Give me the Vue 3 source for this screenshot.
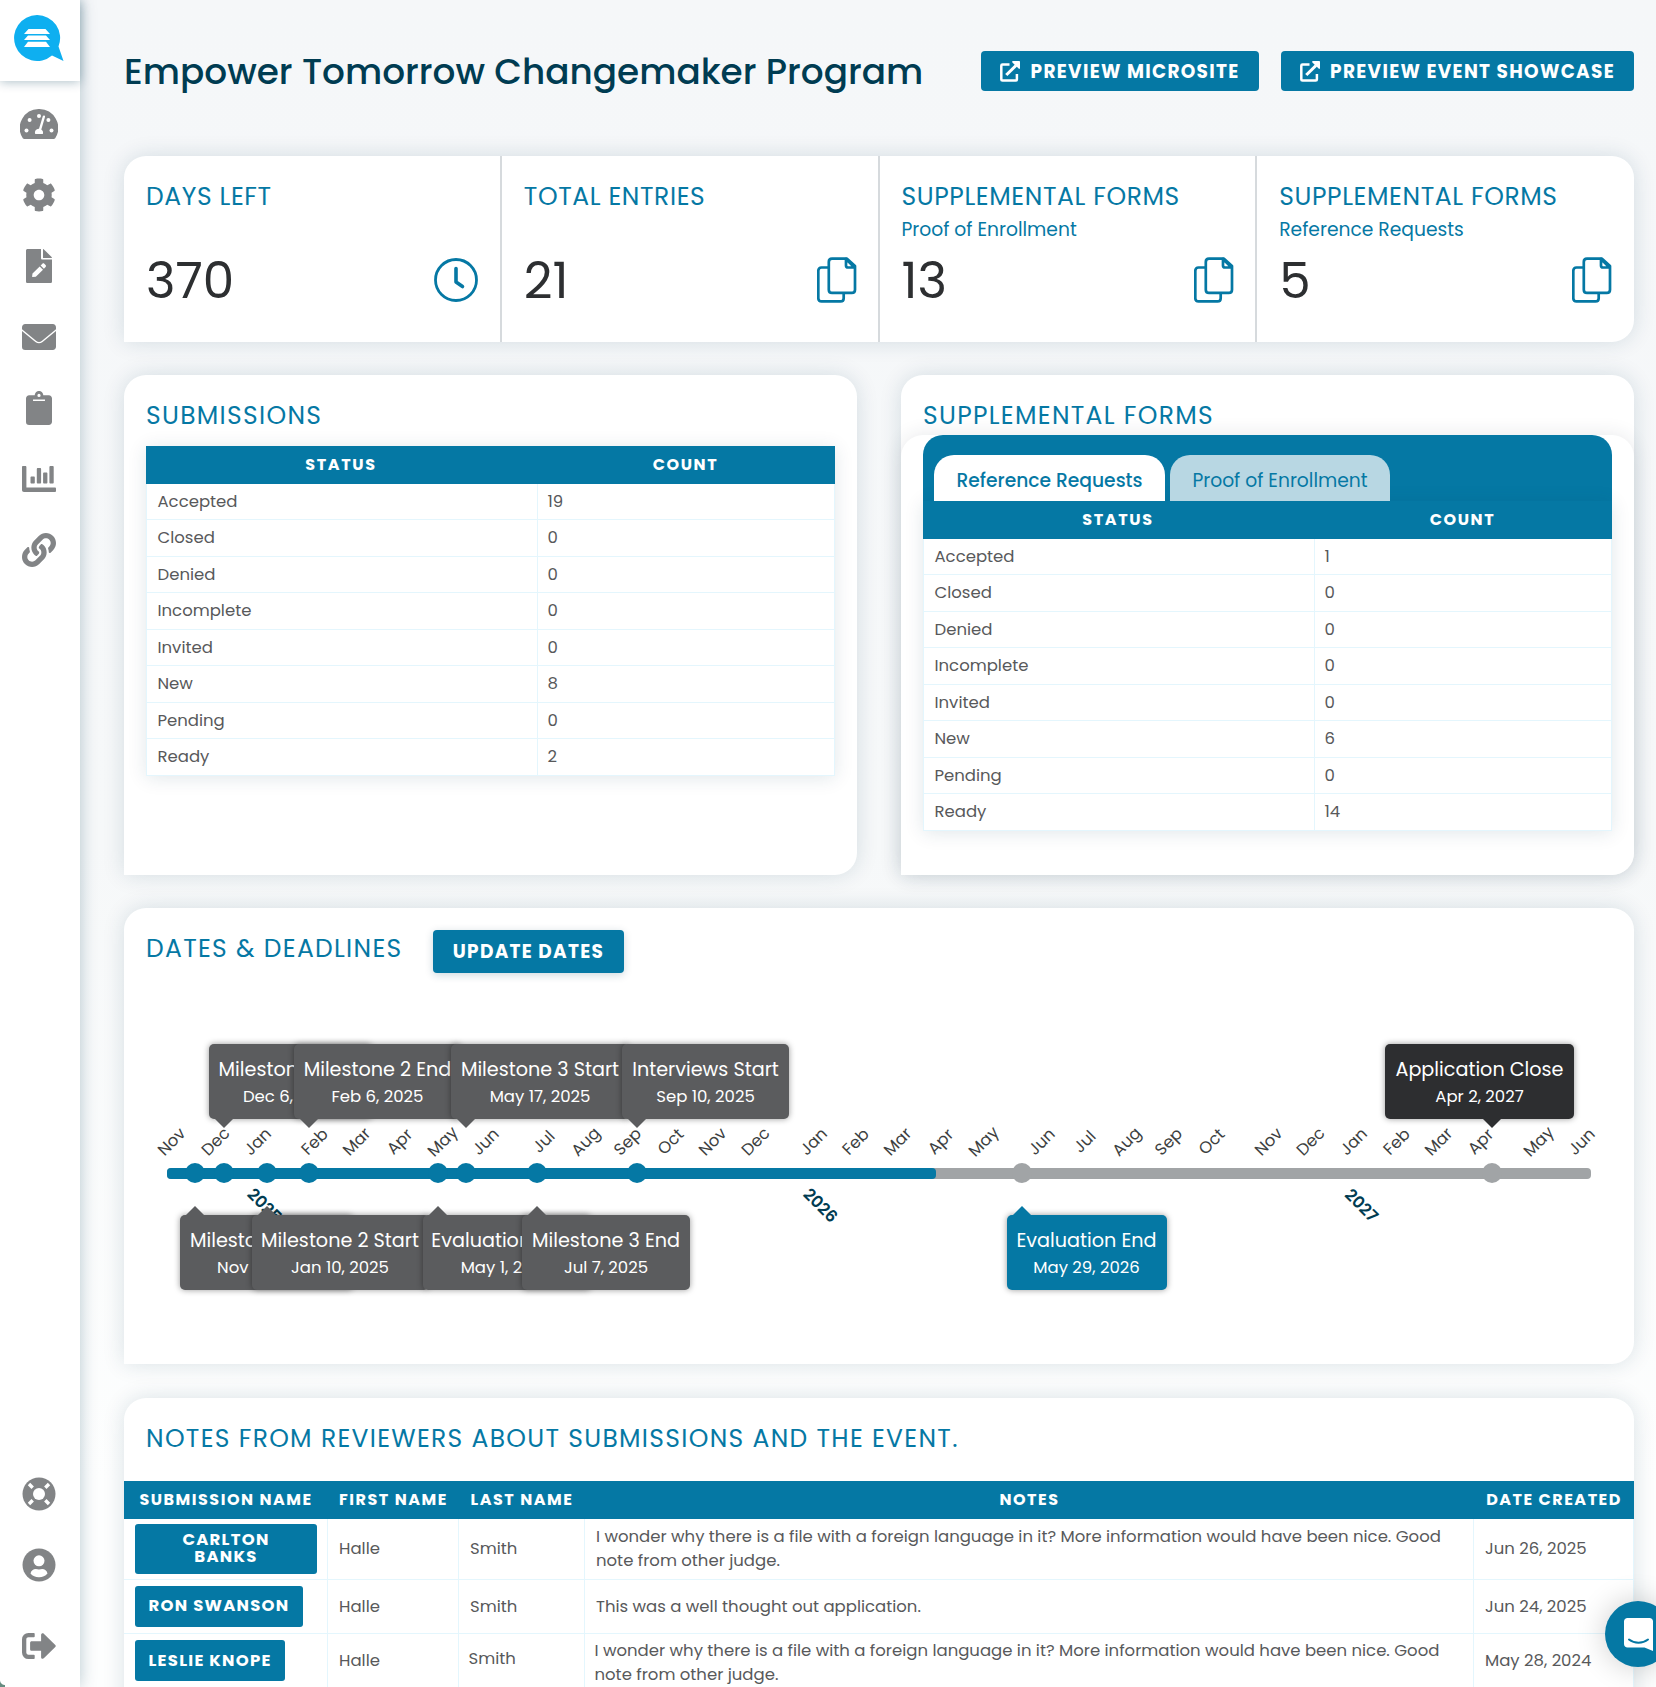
<script setup>
const statuses = ['Accepted', 'Closed', 'Denied', 'Incomplete', 'Invited', 'New', 'Pending', 'Ready']
const submissionCounts = [19, 0, 0, 0, 0, 8, 0, 2]
const supplementalCounts = [1, 0, 0, 0, 0, 6, 0, 14]
const submissions = statuses.map((status, i) => ({ status, count: submissionCounts[i] }))
const supplemental = statuses.map((status, i) => ({ status, count: supplementalCounts[i] }))

const stats = [
  { label: 'DAYS LEFT', value: 370, icon: 'clock' },
  { label: 'TOTAL ENTRIES', value: 21, icon: 'copy' },
  { label: 'SUPPLEMENTAL FORMS', sub: 'Proof of Enrollment', value: 13, icon: 'copy' },
  { label: 'SUPPLEMENTAL FORMS', sub: 'Reference Requests', value: 5, icon: 'copy' }
]

// x offsets are relative to the left end of the timeline bar
const monthX = [5, 49, 91, 148, 190, 233, 276, 319, 377, 419, 461, 504, 546, 589, 647, 689, 731, 774, 817, 875, 918, 960, 1002, 1045, 1102, 1144, 1187, 1230, 1272, 1314, 1372, 1415]
const monthNames = ['Jan', 'Feb', 'Mar', 'Apr', 'May', 'Jun', 'Jul', 'Aug', 'Sep', 'Oct', 'Nov', 'Dec']
const months = monthX.map((x, i) => ({ x, name: monthNames[(i + 10) % 12] }))
const years = [{ x: 97, name: '2025' }, { x: 653, name: '2026' }, { x: 1194, name: '2027' }]
const events = [
  { x: 28, w: 173, title: 'Milestone 1 Start', date: 'Nov 15, 2024', side: 'below' },
  { x: 56.5, w: 163, title: 'Milestone 1 End', date: 'Dec 6, 2024', side: 'above' },
  { x: 99.5, w: 177, title: 'Milestone 2 Start', date: 'Jan 10, 2025', side: 'below' },
  { x: 142, w: 167, title: 'Milestone 2 End', date: 'Feb 6, 2025', side: 'above' },
  { x: 270.5, w: 168, title: 'Evaluation Start', date: 'May 1, 2025', side: 'below' },
  { x: 299, w: 178, title: 'Milestone 3 Start', date: 'May 17, 2025', side: 'above' },
  { x: 370, w: 168, title: 'Milestone 3 End', date: 'Jul 7, 2025', side: 'below' },
  { x: 470, w: 167, title: 'Interviews Start', date: 'Sep 10, 2025', side: 'above' },
  { x: 854.5, w: 160, title: 'Evaluation End', date: 'May 29, 2026', side: 'below', tone: 'next' },
  { x: 1325, w: 189, title: 'Application Close', date: 'Apr 2, 2027', side: 'above', tone: 'future', shift: 92 }
]

const longNote = 'I wonder why there is a file with a foreign language in it? More information would have been nice. Good note from other judge.'
const notes = [
  { name: 'CARLTON BANKS', first: 'Halle', last: 'Smith', note: longNote, date: 'Jun 26, 2025' },
  { name: 'RON SWANSON', first: 'Halle', last: 'Smith', note: 'This was a well thought out application.', date: 'Jun 24, 2025' },
  { name: 'LESLIE KNOPE', first: 'Halle', last: 'Smith', note: longNote, date: 'May 28, 2024' }
]
</script>

<template>
  <div class="page">
    <aside class="sidebar">
      <div class="brand">
        <svg width="50" height="47" viewBox="0 0 50 47"><path fill="#0eaff0" d="M23 0a23 23 0 1 0 15 40.500L49.500 46l-5-14.500A23 23 0 0 0 23 0z" /><path fill="#fff" d="M14.500 14h17l4.500 5H10zM14 20.500h18l4 4.500H10zM14 26.800h18l4 5.200H10z" /></svg>
      </div>
      <nav class="nav">
        <a><svg width="38" height="31" viewBox="0 0 38 31"><path d="M19 0A19 19 0 0 0 2.800 29.200c.4.600.9.800 1.600.8h29.200c.7 0 1.200-.2 1.600-.8A19 19 0 0 0 19 0z" /><g fill="#fff"><circle cx="6.500" cy="21.500" r="2" /><circle cx="9.600" cy="11" r="2" /><circle cx="19" cy="7" r="2" /><circle cx="28.400" cy="11" r="2" /><circle cx="31.500" cy="21.500" r="2" /><path d="M24.200 6.500c.8.200 1 .8.800 1.500l-3.700 12.500a4 4 0 0 1 1.500 4.600h-7.600a3.900 3.900 0 0 1 3.800-5.400l3.800-12.500c.2-.6.800-.9 1.400-.7z" /></g></svg></a>
        <a><svg width="34" height="34" viewBox="0 0 512 512"><path d="M487.4 315.7l-42.6-24.6c4.3-23.2 4.300-47 0-70.200l42.600-24.600c4.900-2.800 7.100-8.600 5.500-14-11.100-35.600-30-67.800-54.700-94.600-3.800-4.100-10-5.100-14.800-2.300L380.800 110c-17.900-15.400-38.500-27.300-60.800-35.100V25.800c0-5.600-3.900-10.500-9.400-11.700-36.700-8.200-74.300-7.800-109.200 0-5.500 1.200-9.400 6.100-9.400 11.700V75c-22.200 7.900-42.800 19.800-60.800 35.100L88.700 85.500c-4.900-2.800-11-1.900-14.800 2.300-24.700 26.700-43.600 58.900-54.700 94.600-1.700 5.400.6 11.200 5.500 14L67.300 221c-4.300 23.200-4.300 47 0 70.200l-42.600 24.600c-4.900 2.800-7.100 8.600-5.500 14 11.100 35.600 30 67.800 54.700 94.600 3.800 4.100 10 5.100 14.800 2.300l42.600-24.600c17.900 15.400 38.500 27.300 60.800 35.100v49.200c0 5.600 3.900 10.500 9.400 11.700 36.700 8.200 74.300 7.800 109.200 0 5.500-1.200 9.400-6.100 9.400-11.700v-49.200c22.200-7.900 42.800-19.800 60.800-35.100l42.600 24.600c4.900 2.800 11 1.900 14.800-2.300 24.700-26.700 43.600-58.900 54.700-94.600 1.500-5.500-.7-11.300-5.600-14.100zM256 336c-44.100 0-80-35.900-80-80s35.900-80 80-80 80 35.900 80 80-35.900 80-80 80z" /></svg></a>
        <a><svg width="26" height="34" viewBox="0 0 26 34"><path d="M1.600 0H15v9.200c0 .8.600 1.400 1.500 1.400H26v21.800c0 .9-.7 1.600-1.600 1.600H1.600C.7 34 0 33.300 0 32.400V1.600C0 .7.700 0 1.600 0zM17 0l.7.200L25.600 8l.4.900h-9z" /><path fill="#fff" d="M13.700 17.400l3.300 3.300-7.200 7.100-3.300.3c-.3 0-.5-.2-.4-.5l.4-3.100zM14.600 16.500l1.800-1.800c.6-.5 1.400-.5 1.900 0l1.300 1.400c.5.500.5 1.300 0 1.800l-1.700 1.800z" /></svg></a>
        <a><svg width="34" height="26" viewBox="0 0 34 26"><path d="M3.200 0h27.600C32.600 0 34 1.400 34 3.200v2L20 16.700c-2 1.600-4 1.600-6 0L0 5.200v-2C0 1.400 1.400 0 3.200 0z" /><path d="M0 7l13.400 11c2.300 1.800 4.900 1.800 7.200 0L34 7v15.800c0 1.800-1.400 3.200-3.200 3.200H3.200A3.200 3.200 0 0 1 0 22.800z" /></svg></a>
        <a><svg width="26" height="34" viewBox="0 0 26 34"><path fill-rule="evenodd" d="M3.200 4.200h5.500a4.300 4.300 0 0 1 8.600 0h5.500C24.600 4.200 26 5.600 26 7.400v23.400c0 1.800-1.400 3.200-3.200 3.200H3.200A3.200 3.200 0 0 1 0 30.800V7.400c0-1.800 1.400-3.200 3.200-3.200zM13 2.800a1.600 1.600 0 1 0 0 3.200 1.600 1.600 0 0 0 0-3.200zM7 8.600v.8c0 .4.300.6.600.6h10.800c.3 0 .6-.2.600-.6v-.8z" /></svg></a>
        <a><svg width="34" height="26" viewBox="0 0 34 26"><path d="M1 0h2.400c.6 0 1 .5 1 1v20.500H33c.5 0 1 .5 1 1V25c0 .5-.5 1-1 1H2c-1.200 0-2-.8-2-2V1c0-.5.400-1 1-1zM9.500 10.500h2.300c.6 0 1 .4 1 1v5c0 .600-.4 1-1 1H9.500c-.5 0-1-.4-1-1v-5c0-.6.500-1 1-1zM15.800 2h2.300c.6 0 1 .5 1 1v13.500c0 .6-.4 1-1 1h-2.300c-.5 0-1-.4-1-1V3c0-.5.500-1 1-1zM22.100 6.500h2.300c.6 0 1 .4 1 1v9c0 .6-.4 1-1 1h-2.300c-.5 0-1-.4-1-1v-9c0-.6.500-1 1-1zM28.400 0h2.300c.6 0 1 .500 1 1v15.500c0 .6-.4 1-1 1h-2.300c-.5 0-1-.4-1-1V1c0-.5.500-1 1-1z" /></svg></a>
        <a><svg width="34" height="34" viewBox="0 0 512 512"><path d="M326.612 185.391c59.747 59.809 58.927 155.698.36 214.590-.11.12-.24.25-.36.37l-67.200 67.200c-59.270 59.270-155.699 59.262-214.960 0-59.270-59.260-59.270-155.700 0-214.960l37.106-37.106c9.840-9.840 26.786-3.300 27.294 10.606.648 17.722 3.826 35.527 9.690 52.721 1.986 5.822.567 12.262-3.783 16.612l-13.087 13.087c-28.026 28.026-28.905 73.660-1.155 101.960 28.024 28.579 74.086 28.749 102.325.51l67.200-67.190c28.191-28.191 28.073-73.757 0-101.830-3.701-3.694-7.429-6.564-10.341-8.569a16.037 16.037 0 0 1-6.947-12.606c-.396-10.567 3.348-21.456 11.698-29.806l21.054-21.055c5.521-5.521 14.182-6.199 20.584-1.731a152.482 152.482 0 0 1 20.522 17.197zM467.547 44.449c-59.261-59.262-155.690-59.270-214.960 0l-67.200 67.200c-.12.12-.25.25-.36.37-58.566 58.892-59.387 154.781.36 214.590a152.454 152.454 0 0 0 20.521 17.196c6.402 4.468 15.064 3.789 20.584-1.731l21.054-21.055c8.350-8.350 12.094-19.239 11.698-29.806a16.037 16.037 0 0 0-6.947-12.606c-2.912-2.005-6.640-4.875-10.341-8.569-28.073-28.073-28.191-73.639 0-101.830l67.200-67.190c28.239-28.239 74.300-28.069 102.325.51 27.750 28.300 26.872 73.934-1.155 101.960l-13.087 13.087c-4.350 4.350-5.769 10.790-3.783 16.612 5.864 17.194 9.042 34.999 9.690 52.721.509 13.906 17.454 20.446 27.294 10.606l37.106-37.106c59.271-59.259 59.271-155.699.001-214.959z" /></svg></a>
      </nav>
      <nav class="nav nav-bottom">
        <a><svg width="34" height="34" viewBox="0 0 34 34"><circle cx="17" cy="17" r="16.500" /><circle cx="17" cy="17" r="6" fill="#fff" /><g stroke="#fff" stroke-width="3.400"><path d="M7 7l3.700 3.700M27 7l-3.700 3.700M7 27l3.700-3.700M27 27l-3.700-3.700" /></g></svg></a>
        <a><svg width="34" height="34" viewBox="0 0 34 34"><circle cx="17" cy="17" r="16.500" /><circle cx="17" cy="12.800" r="5.500" fill="#fff" /><path fill="#fff" d="M8.500 25.500c.6-3 2.800-4.500 5.300-4.500l3.200.6 3.200-.6c2.500 0 4.700 1.500 5.300 4.500A11 11 0 0 1 17 29.300a11 11 0 0 1-8.500-3.800z" /></svg></a>
        <a class="logout"><svg width="34" height="26" viewBox="0 0 34 26"><path d="M33.300 14.100L21.800 25.300c-1 1-2.700.3-2.700-1.100v-6.400H9.700c-.9 0-1.600-.7-1.600-1.600V9.800c0-.9.700-1.600 1.600-1.600h9.400V1.800c0-1.400 1.700-2.100 2.700-1.100l11.500 11.200c.6.600.6 1.600 0 2.200z" /><path d="M12.700 25.200V22.500c0-.4-.4-.8-.8-.8H6.400c-1.200 0-2.100-1-2.100-2.100V6.400c0-1.200.9-2.100 2.100-2.100h5.500c.4 0 .8-.4.800-.8V.8c0-.4-.4-.8-.8-.8H6.400A6.400 6.400 0 0 0 0 6.400v13.200A6.400 6.400 0 0 0 6.400 26h5.500c.4 0 .8-.4.800-.8z" /></svg></a>
      </nav>
      <i class="corner"></i>
    </aside>

    <main class="main">
      <header class="top">
        <h1>Empower Tomorrow Changemaker Program</h1>
        <div class="actions">
          <a v-for="label in ['PREVIEW MICROSITE', 'PREVIEW EVENT SHOWCASE']" :key="label" class="btn btn-top">
            <svg width="20" height="21" viewBox="0 0 20 21" fill="none"><path d="M9.500 3.600H2.500c-.7 0-1.200.5-1.200 1.200v13.600c0 .7.500 1.200 1.200 1.200h13.200c.7 0 1.200-.5 1.200-1.200V13" stroke="#fff" stroke-width="2.500" /><path d="M6.300 14L16 4.500" stroke="#fff" stroke-width="3.100" /><path d="M13 0h6.200c.5 0 .8.400.8.800V7c0 .8-.9 1.200-1.400.6l-6.200-6.200C11.800.9 12.200 0 13 0z" fill="#fff" /></svg>
            <span>{{ label }}</span>
          </a>
        </div>
      </header>

      <section class="card stats">
        <div v-for="(s, i) in stats" :key="i" class="stat">
          <div class="stat-label">{{ s.label }}</div>
          <div class="stat-sub">{{ s.sub }}</div>
          <div class="stat-row">
            <span class="stat-value">{{ s.value }}</span>
            <svg v-if="s.icon === 'clock'" class="clock" width="44" height="44" viewBox="0 0 44 44"><circle cx="22" cy="22" r="20.500" stroke-width="2.800" /><path d="M22 10.500v13.500l6.500 4.500" stroke-width="3.600" stroke-linecap="round" stroke-linejoin="round" /></svg>
            <svg v-else class="copy" width="40" height="46" viewBox="0 0 40 46" stroke-width="2.700" stroke-linejoin="round"><path d="M15 1.700h15L38 9v23.700c0 2-1.200 3.200-3.200 3.200H15c-2 0-3.200-1.200-3.200-3.200V4.900c0-2 1.200-3.200 3.200-3.200z" /><path d="M29 2v6.500c0 1.500.5 2 2 2h6.500z" /><path d="M11.800 10.500H4.500c-2 0-3.200 1.200-3.200 3.200v27.500c0 2 1.200 3.200 3.200 3.200h19c2 0 3.200-1.200 3.200-3.200V36" /></svg>
          </div>
        </div>
      </section>

      <div class="panels">
        <section class="card panel">
          <h2>SUBMISSIONS</h2>
          <div class="grid">
            <div class="grid-head"><span>STATUS</span><span>COUNT</span></div>
            <div v-for="r in submissions" :key="r.status" class="grid-row"><span>{{ r.status }}</span><span>{{ r.count }}</span></div>
          </div>
        </section>
        <section class="card panel forms">
          <h2>SUPPLEMENTAL FORMS</h2>
          <div class="tab-card">
            <div class="tabs"><a class="tab active">Reference Requests</a><a class="tab">Proof of Enrollment</a></div>
            <div class="grid">
              <div class="grid-head"><span>STATUS</span><span>COUNT</span></div>
              <div v-for="r in supplemental" :key="r.status" class="grid-row"><span>{{ r.status }}</span><span>{{ r.count }}</span></div>
            </div>
          </div>
        </section>
      </div>

      <section class="card dates">
        <div class="dates-head"><h2>DATES &amp; DEADLINES</h2><a class="btn btn-update">UPDATE DATES</a></div>
        <div class="timeline">
          <div class="bar"><div class="elapsed"></div></div>
          <span v-for="(m, i) in months" :key="i" class="month" :style="{ left: m.x + 'px' }">{{ m.name }}</span>
          <span v-for="y in years" :key="y.name" class="year" :style="{ left: y.x + 'px' }">{{ y.name }}</span>
          <i v-for="e in events" :key="e.x" class="dot" :class="{ upcoming: e.tone }" :style="{ left: e.x + 'px' }"></i>
          <div v-for="e in events" :key="e.title" class="tip" :class="[e.side, e.tone]" :style="{ left: e.x - 15 - (e.shift || 0) + 'px', width: e.w + 'px', '--arrow': 15 + (e.shift || 0) + 'px' }">
            <b>{{ e.title }}</b><span>{{ e.date }}</span>
          </div>
        </div>
      </section>

      <section class="card notes">
        <h2>NOTES FROM REVIEWERS ABOUT SUBMISSIONS AND THE EVENT.</h2>
        <div class="note-head note-cols"><span>SUBMISSION NAME</span><span>FIRST NAME</span><span>LAST NAME</span><span>NOTES</span><span>DATE CREATED</span></div>
        <div v-for="n in notes" :key="n.name" class="note-row note-cols">
          <div><a class="btn btn-name">{{ n.name }}</a></div>
          <div>{{ n.first }}</div>
          <div class="last-name">{{ n.last }}</div>
          <div class="note-text">{{ n.note }}</div>
          <div>{{ n.date }}</div>
        </div>
      </section>
    </main>

    <div class="chat">
      <svg width="29" height="33" viewBox="0 0 29 33"><path fill="#fff" d="M3.500 0h22C27.500 0 29 1.500 29 3.500V33l-8.500-3.500h-17C1.500 29.500 0 28 0 26V3.500C0 1.500 1.500 0 3.500 0z" /><path d="M5 21.500c5.500 4.300 13.500 4.300 19 0" fill="none" stroke="#0577a3" stroke-width="2" stroke-linecap="round" /></svg>
    </div>
  </div>
</template>

<style>
body {
  margin: 0;
  overflow: hidden;
}
</style>

<style scoped>
.page {
  position: relative;
  display: flex;
  width: 1656px;
  height: 1687px;
  overflow: hidden;
  box-sizing: border-box;
  background: linear-gradient(#f5f7f9, #f6f8f9 50%, #fdfefe 88%);
  font-family: Poppins, Inter, "Open Sans", sans-serif;
  color: #58595b;
}
.page * { box-sizing: border-box; }
.sidebar {
  position: relative;
  z-index: 1;
  flex: none;
  display: flex;
  flex-direction: column;
  width: 80px;
  background: #fff;
  box-shadow: 0 0 16px rgba(0, 60, 85, 0.28);
}
.brand {
  height: 81px;
  padding: 15px 0 0 13.500px;
  box-shadow: 0 1px 10px rgba(0, 60, 85, 0.32);
}
.nav {
  display: flex;
  flex-direction: column;
  padding-top: 8px;
  padding-right: 3px;
}
.nav a {
  display: flex;
  align-items: center;
  justify-content: center;
  height: 70.900px;
}
.nav svg { fill: #828486; }
.nav-bottom { margin-top: auto; }
.nav-bottom .logout { height: 92px; margin-bottom: -5px; }
.corner {
  position: absolute;
  left: 0;
  bottom: 0;
  width: 5px;
  height: 7px;
  background: radial-gradient(circle at 100% 0, transparent 4.500px, #668c80 5.500px);
}
.main {
  display: flex;
  flex-direction: column;
  flex: none;
  width: 1510px;
  margin-left: 44px;
}
.top {
  display: flex;
  justify-content: space-between;
  align-items: center;
  flex: none;
  height: 142px;
  margin-bottom: 13.500px;
}
h1 {
  margin: 0;
  font-size: 35.850px;
  font-weight: 500;
  color: #003c52;
  white-space: nowrap;
}
.actions { display: flex; gap: 22px; }
.btn {
  display: flex;
  align-items: center;
  justify-content: center;
  background: #0578a4;
  color: #fff;
  border-radius: 4px;
  font-weight: 700;
  white-space: nowrap;
}
.btn-top {
  height: 40px;
  padding: 0 19px;
  gap: 10.500px;
  font-size: 18.500px;
  letter-spacing: 1.300px;
}
.card {
  flex: none;
  background: #fff;
  border-radius: 22px 22px 22px 0;
  box-shadow: 0 0 22px rgba(0, 60, 85, 0.14);
}
.stats { display: flex; height: 186px; margin-bottom: 33px; }
.stat {
  flex: 1;
  padding: 26px 21px 0 22px;
  border-right: 2px solid #d6dadd;
  color: #0578a4;
}
.stat:last-child { border-right: 0; padding-right: 22px; }
.stat-label { font-size: 25px; line-height: 30px; letter-spacing: 0.600px; white-space: nowrap; }
.stat-sub { height: 26px; margin-top: 5px; font-size: 18.700px; line-height: 26px; }
.stat-row { display: flex; justify-content: space-between; align-items: center; height: 52px; margin-top: 11px; }
.stat-value { padding-top: 3px; font-size: 50px; line-height: 52px; color: #2d2f31; }
.stat svg { fill: none; stroke: #0578a4; }
.clock { margin-right: 1px; }
.panels { display: flex; gap: 44px; margin-bottom: 33px; }
.panel { width: 733px; height: 500px; padding: 25px 22px 0; }
h2 {
  margin: 0;
  font-size: 25px;
  font-weight: 400;
  line-height: 32px;
  letter-spacing: 1.300px;
  color: #0578a4;
  white-space: nowrap;
}
.grid { box-shadow: 0 2px 18px rgba(0, 60, 85, 0.12); background: #fff; }
.panel > .grid { margin-top: 14px; }
.grid-head, .grid-row { display: grid; grid-template-columns: 390px 299px; align-items: center; }
.grid-head {
  height: 38px;
  padding-bottom: 1px;
  background: #0578a4;
  color: #fff;
  font-size: 16px;
  font-weight: 700;
  letter-spacing: 1.600px;
  text-align: center;
}
.grid-row {
  height: 36.500px;
  font-size: 16.500px;
  border: 1px solid #e4f6fd;
  border-top: 0;
}
.grid-row span { display: flex; align-items: center; height: 100%; padding-left: 10.500px; }
.grid-row span + span { border-left: 1px solid #e4f6fd; padding-left: 9.500px; }
.tab-card {
  height: 440px;
  margin: 3px -22px 0;
  padding: 0 22px;
  border-radius: 22px 22px 22px 0;
  background: #fff;
  box-shadow: 0 0 20px rgba(40, 50, 60, 0.11);
}
.tabs {
  display: flex;
  align-items: flex-end;
  gap: 5px;
  height: 66px;
  padding-left: 11px;
  border-radius: 20px 20px 0 0;
  background: #0578a4;
}
.tab {
  width: 220px;
  height: 45.500px;
  border-radius: 20px 20px 0 0;
  background: #b8d7e3;
  color: #0578a4;
  font-size: 18.700px;
  line-height: 52px;
  text-align: center;
}
.tab.active { width: 231px; background: #fff; font-weight: 500; }
.dates { height: 456px; padding: 22px 22px 0; margin-bottom: 34px; }
.dates-head { display: flex; gap: 31px; height: 43px; }
.dates-head h2 { width: 256px; line-height: 38px; }
.btn-update {
  width: 191px;
  font-size: 18.500px;
  letter-spacing: 1.300px;
  box-shadow: 0 2px 8px rgba(0, 60, 85, 0.2);
}
.timeline { position: relative; margin: 195px 21px 0; }
.bar { height: 11px; border-radius: 4px; background: #a1a4a6; }
.elapsed { width: 769px; height: 11px; border-radius: 4px; background: #0578a4; }
.dot {
  position: absolute;
  top: -5px;
  width: 20px;
  height: 20px;
  margin-left: -10px;
  border-radius: 50%;
  background: #0578a4;
}
.dot.upcoming { background: #a1a4a6; }
.month, .year {
  position: absolute;
  width: 60px;
  margin-left: -30px;
  text-align: center;
  font-size: 16.500px;
  line-height: 20px;
}
.month { top: -36px; transform: rotate(-45deg); color: #3d3f41; }
.year { top: 28px; transform: rotate(45deg); color: #003c52; font-weight: 600; }
.tip {
  position: absolute;
  height: 75px;
  padding-top: 12px;
  border-radius: 5px;
  background: #5b5c5e;
  color: #fff;
  text-align: center;
  white-space: nowrap;
  box-shadow: 0 0 6px rgba(0, 0, 0, 0.4);
}
.tip.above { top: -124px; }
.tip.below { top: 47.500px; }
.tip::after {
  content: "";
  position: absolute;
  left: calc(var(--arrow) - 9px);
  border: 9px solid transparent;
}
.tip.above::after { top: 75px; border-top-color: #5b5c5e; border-bottom: 0; }
.tip.below::after { bottom: 75px; border-bottom-color: #5b5c5e; border-top: 0; }
.tip.next { background: #0578a4; }
.tip.next::after { border-bottom-color: #0578a4; }
.tip.future { background: #2d2e30; }
.tip.future::after { border-top-color: #2d2e30; }
.tip b, .tip span { display: block; }
.tip b { font-size: 19.200px; font-weight: 400; line-height: 27px; }
.tip span { font-size: 16.500px; line-height: 27px; }
.notes { height: 340px; }
.notes h2 { padding: 25px 22px 26px; }
.note-cols { display: grid; grid-template-columns: 204px 131px 126px 889px 160px; }
.note-head {
  height: 38px;
  align-items: center;
  background: #0578a4;
  color: #fff;
  font-size: 16px;
  font-weight: 700;
  letter-spacing: 1.500px;
  text-align: center;
  white-space: nowrap;
}
.note-row { height: 54px; font-size: 16.500px; }
.note-row:nth-child(3) { height: 61.500px; }
.note-row > div {
  display: flex;
  align-items: center;
  padding-left: 11px;
  border-right: 1px solid #e4f6fd;
  border-bottom: 1px solid #e4f6fd;
}
.note-row .note-text { line-height: 24.300px; padding-right: 26px; padding-top: 1px; }
.note-row:nth-child(5) .last-name { padding: 0 0 4px 9.500px; }
.note-row:nth-child(5) .note-text { padding-top: 5px; padding-left: 9.500px; }
.btn-name {
  max-width: 182px;
  min-height: 41px;
  padding: 4px 13.500px;
  border-radius: 3px;
  font-size: 16.500px;
  line-height: 16.500px;
  letter-spacing: 1.250px;
}
.note-row:nth-child(3) .btn-name { width: 182px; height: 50px; padding: 0 40px; white-space: normal; text-align: center; }
.chat {
  position: absolute;
  right: -15px;
  bottom: 20px;
  z-index: 2;
  display: flex;
  align-items: center;
  justify-content: center;
  width: 66px;
  height: 66px;
  border-radius: 50%;
  background: #0578a4;
  box-shadow: 0 0 30px rgba(0, 0, 0, 0.2);
}
</style>
